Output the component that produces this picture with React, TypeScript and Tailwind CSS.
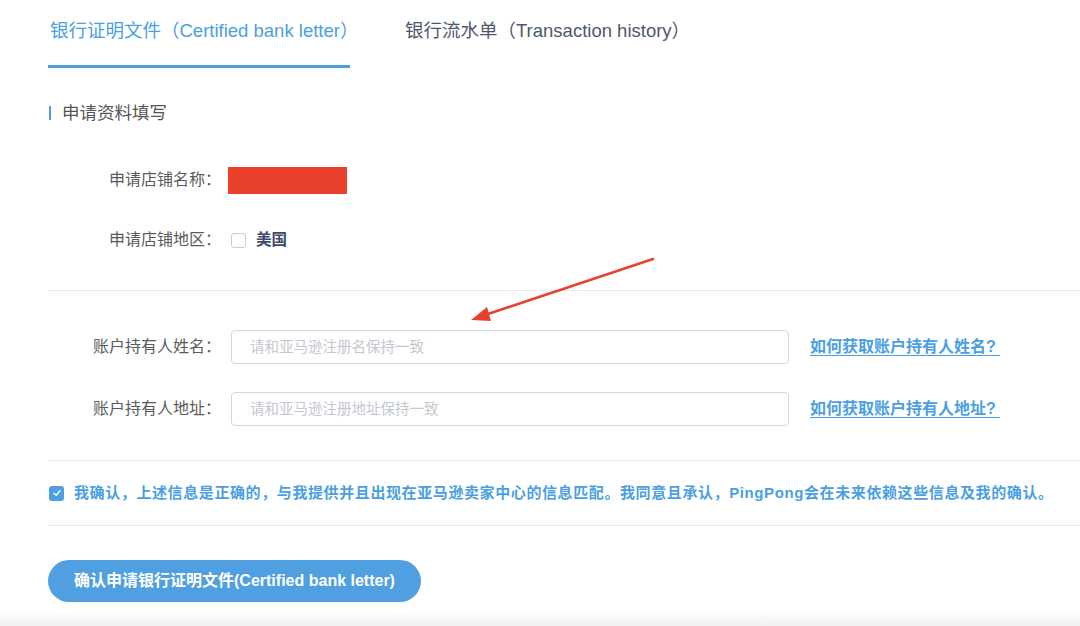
import React from "react";

const font = { fontFamily: '"Liberation Sans", "Noto Sans CJK SC", sans-serif' };

function Label({ children }: { children: React.ReactNode }) {
  return (
    <div className="w-[180px] shrink-0 text-right text-[16px] text-[#5b5b5b] pr-[7px]">{children}</div>
  );
}

export default function App() {
  return (
    <div style={font} className="relative w-[1080px] h-[626px] overflow-hidden bg-white">
      {/* tabs */}
      <div className="flex pl-[48px]">
        <div className="w-[302px] pl-[2px] pt-[19px] pb-[22px] border-b-[3px] border-[#4b9fe1] text-[18.5px] leading-[24px] text-[#4b9fe1] whitespace-nowrap">
          银行证明文件（Certified bank letter）
        </div>
        <div className="ml-[55px] pt-[19px] text-[18.5px] leading-[24px] text-[#4f586b] whitespace-nowrap">
          银行流水单（Transaction history）
        </div>
      </div>

      {/* section title */}
      <div className="mt-[33px] ml-[49px] flex items-center h-[24px]">
        <div className="w-[2px] h-[14px] bg-[#4b9fe1]" />
        <div className="ml-[11px] text-[17.5px] text-[#555]">申请资料填写</div>
      </div>

      {/* store rows */}
      <div className="pl-[48px] mt-[41px] flex flex-col gap-[32px]">
        <div className="flex items-center h-[28px]">
          <Label>申请店铺名称：</Label>
          <div className="w-[119px] h-[27px] bg-[#e8402a]" />
        </div>
        <div className="flex items-center h-[28px]">
          <Label>申请店铺地区：</Label>
          <div className="ml-[3px] w-[15px] h-[15px] rounded-[3px] border border-[#c9cdd5] bg-white" />
          <span className="ml-[10px] text-[15.5px] font-semibold text-[#3b4a6e]">美国</span>
        </div>
      </div>

      <div className="ml-[48px] mt-[36px] border-t border-[#ececec]" />

      {/* account rows */}
      <div className="pl-[48px] mt-[39px] flex flex-col gap-[28px]">
        {[
          ["账户持有人姓名：", "请和亚马逊注册名保持一致", "如何获取账户持有人姓名? "],
          ["账户持有人地址：", "请和亚马逊注册地址保持一致", "如何获取账户持有人地址? "],
        ].map(([label, ph, link]) => (
          <div key={label} className="flex items-center">
            <Label>{label}</Label>
            <input
              placeholder={ph}
              className="ml-[3px] w-[558px] h-[34px] rounded-[4px] border border-[#d3d6de] px-[18px] text-[14.5px] outline-none placeholder:text-[#c4c7cf]"
              style={font}
            />
            <a className="ml-[21px] text-[16px] font-semibold text-[#4b9fe1] underline underline-offset-[3px] whitespace-pre">
              {link}
            </a>
          </div>
        ))}
      </div>

      <div className="ml-[48px] mt-[34px] border-t border-[#ececec]" />

      {/* confirm */}
      <div className="ml-[49px] mt-[20px] flex items-center h-[24px]">
        <div className="w-[15px] h-[15px] rounded-[3px] bg-[#4f9fe1] flex items-center justify-center">
          <svg width="10" height="10" viewBox="0 0 10 10" fill="none">
            <path d="M2 5.2 L4.2 7.2 L8 2.8" stroke="white" strokeWidth="1.4" strokeLinecap="round" strokeLinejoin="round" />
          </svg>
        </div>
        <div className="ml-[10px] text-[15px] tracking-[0.6px] font-semibold text-[#4b9fe1] whitespace-nowrap">
          我确认，上述信息是正确的，与我提供并且出现在亚马逊卖家中心的信息匹配。我同意且承认，PingPong会在未来依赖这些信息及我的确认。
        </div>
      </div>

      <div className="ml-[48px] mt-[20px] border-t border-[#ececec]" />

      <button className="ml-[48px] mt-[34px] w-[373px] h-[42px] rounded-full bg-[#4f9fe1] text-white text-[16px] font-semibold" style={font}>
        确认申请银行证明文件(Certified bank letter)
      </button>

      {/* bottom shade */}
      <div className="absolute left-0 right-0 bottom-0 h-[14px] bg-gradient-to-b from-white to-[#f1f1f1]" />

      {/* annotation arrow */}
      <svg className="absolute left-0 top-0 pointer-events-none" width="1080" height="626">
        <line x1="653" y1="259" x2="482" y2="316" stroke="#e8412b" strokeWidth="2.5" strokeLinecap="round" />
        <polygon points="471,320 487,307 491,321" fill="#e8412b" />
      </svg>
    </div>
  );
}
